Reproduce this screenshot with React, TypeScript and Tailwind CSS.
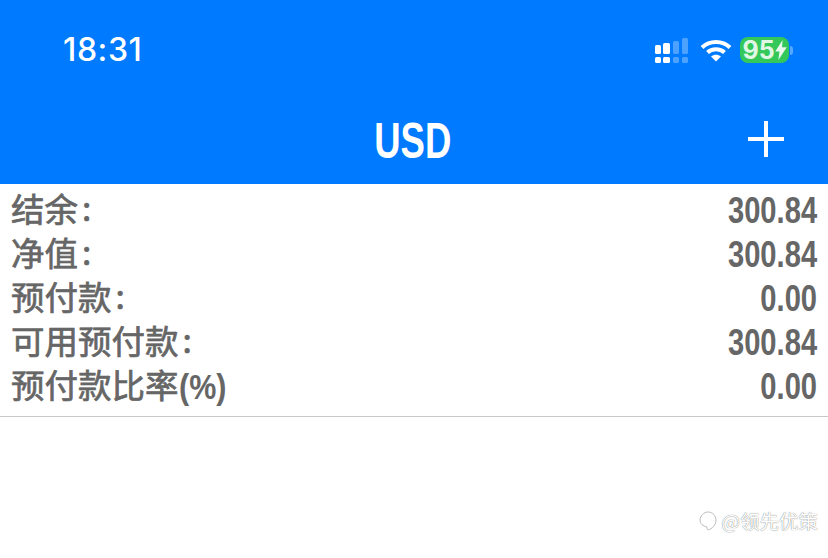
const rows = [
  {label: '结余', colon: true, value: '300.84'},
  {label: '净值', colon: true, value: '300.84'},
  {label: '预付款', colon: true, value: '0.00'},
  {label: '可用预付款', colon: true, value: '300.84'},
  {label: '预付款比率', colon: false, value: '0.00'},
]

function SignalIcon() {
  return (
    <svg width="34" height="26" viewBox="0 0 34 26" className="block">
      <rect x="1" y="8" width="6" height="9" rx="1.5" fill="#fff" />
      <rect x="1" y="20" width="6" height="6" rx="1.5" fill="#fff" />
      <rect x="9" y="6" width="7" height="11" rx="1.5" fill="#fff" />
      <rect x="9" y="20" width="7" height="6" rx="1.5" fill="#fff" />
      <rect x="19" y="4" width="6" height="13" rx="1.5" fill="#fff" opacity="0.3" />
      <rect x="19" y="20" width="6" height="6" rx="1.5" fill="#fff" opacity="0.3" />
      <rect x="28" y="1" width="6" height="16" rx="1.5" fill="#fff" opacity="0.3" />
      <rect x="28" y="20" width="6" height="6" rx="1.5" fill="#fff" opacity="0.3" />
    </svg>
  )
}

function WifiIcon() {
  return (
    <svg width="32" height="24" viewBox="0 0 32 24" fill="none" className="block">
      <path d="M2 9.5C9.5 2.2 22.5 2.2 30 9.5" stroke="#fff" strokeWidth="4" />
      <path d="M7.5 14.5C12 10.2 20 10.2 24.5 14.5" stroke="#fff" strokeWidth="4" />
      <path d="M11 18.5C14 16 18 16 21 18.5L16 23.5Z" fill="#fff" />
    </svg>
  )
}

export default function App() {
  return (
    <div className="w-[828px] h-[558px] bg-white overflow-hidden relative font-['Liberation_Sans','Noto_Sans_CJK_SC',sans-serif]">
      <header className="h-[184px] bg-[#007aff] text-white flex flex-col">
        <div className="h-[100px] pl-[63px] pr-[35px] flex items-center justify-between">
          <span className="text-[32px] font-medium font-['Inter',sans-serif] tracking-[0.6px]">18:31</span>
          <div className="flex items-center">
            <SignalIcon />
            <div className="w-[12px]" />
            <WifiIcon />
            <div className="w-[8px]" />
            <div className="flex items-center">
              <div className="w-[49px] h-[26px] rounded-[8px] bg-[#34c759] flex items-center justify-center text-[25px] leading-none font-bold text-white/85 font-['Inter',sans-serif]">
                95
                <svg width="12" height="20" viewBox="0 0 11 19"><path d="M7 0 0 11h4l-1 8 8-12H6.5Z" fill="#e8f8ec" /></svg>
              </div>
              <div className="w-[3px] h-[9px] ml-[1px] rounded-r-full bg-white/35" />
            </div>
          </div>
        </div>
        <div className="flex-1 flex items-center justify-center relative">
          <h1 className="text-[50px] leading-none font-bold scale-x-[0.73] -mt-[2px] mr-[2px]">USD</h1>
          <svg width="36" height="36" viewBox="0 0 36 36" className="absolute right-[44px] top-[21px]">
            <path d="M18 0v36M0 18h36" stroke="#fff" strokeWidth="4" />
          </svg>
        </div>
      </header>
      <div className="border-b border-[#c8c8c8] pl-[11px] pr-[11px] pt-[4px] pb-[8px] text-[#666666]">
        {rows.map(r => (
          <div key={r.label} className="h-[44px] flex items-center justify-between">
            <span className="text-[33.5px] leading-none font-normal [-webkit-text-stroke:0.7px_#666666] -mt-[4px] font-['Noto_Sans_CJK_SC',sans-serif] flex items-center">
              {r.label}
              {r.colon ? (
                <span className="ml-[4px] -mt-[3px]">:</span>
              ) : (
                <span className="inline-block text-[35px] font-bold [-webkit-text-stroke:0] font-['Liberation_Sans',sans-serif] scale-x-[0.87] origin-left mt-[4px] w-[46px]">(%)</span>
              )}
            </span>
            <span className="text-[36px] leading-none font-bold scale-x-[0.81] origin-right mt-[1px]">{r.value}</span>
          </div>
        ))}
      </div>
      <div className="absolute right-[10px] top-[510px] flex items-center gap-[4px] text-[19.5px] leading-none text-white [text-shadow:0_0_1px_#555] font-['Noto_Sans_CJK_SC',sans-serif]">
        <svg width="20" height="22" viewBox="0 0 20 22" fill="none">
          <path d="M10 2c5 0 8 4 8 8 0 5-4 9-8 10-1-1-1-2-1-3-4-1-7-3-7-7 0-4 4-8 8-8Z" stroke="#bbb" strokeWidth="1" />
        </svg>
        @领先优策
      </div>
    </div>
  )
}
